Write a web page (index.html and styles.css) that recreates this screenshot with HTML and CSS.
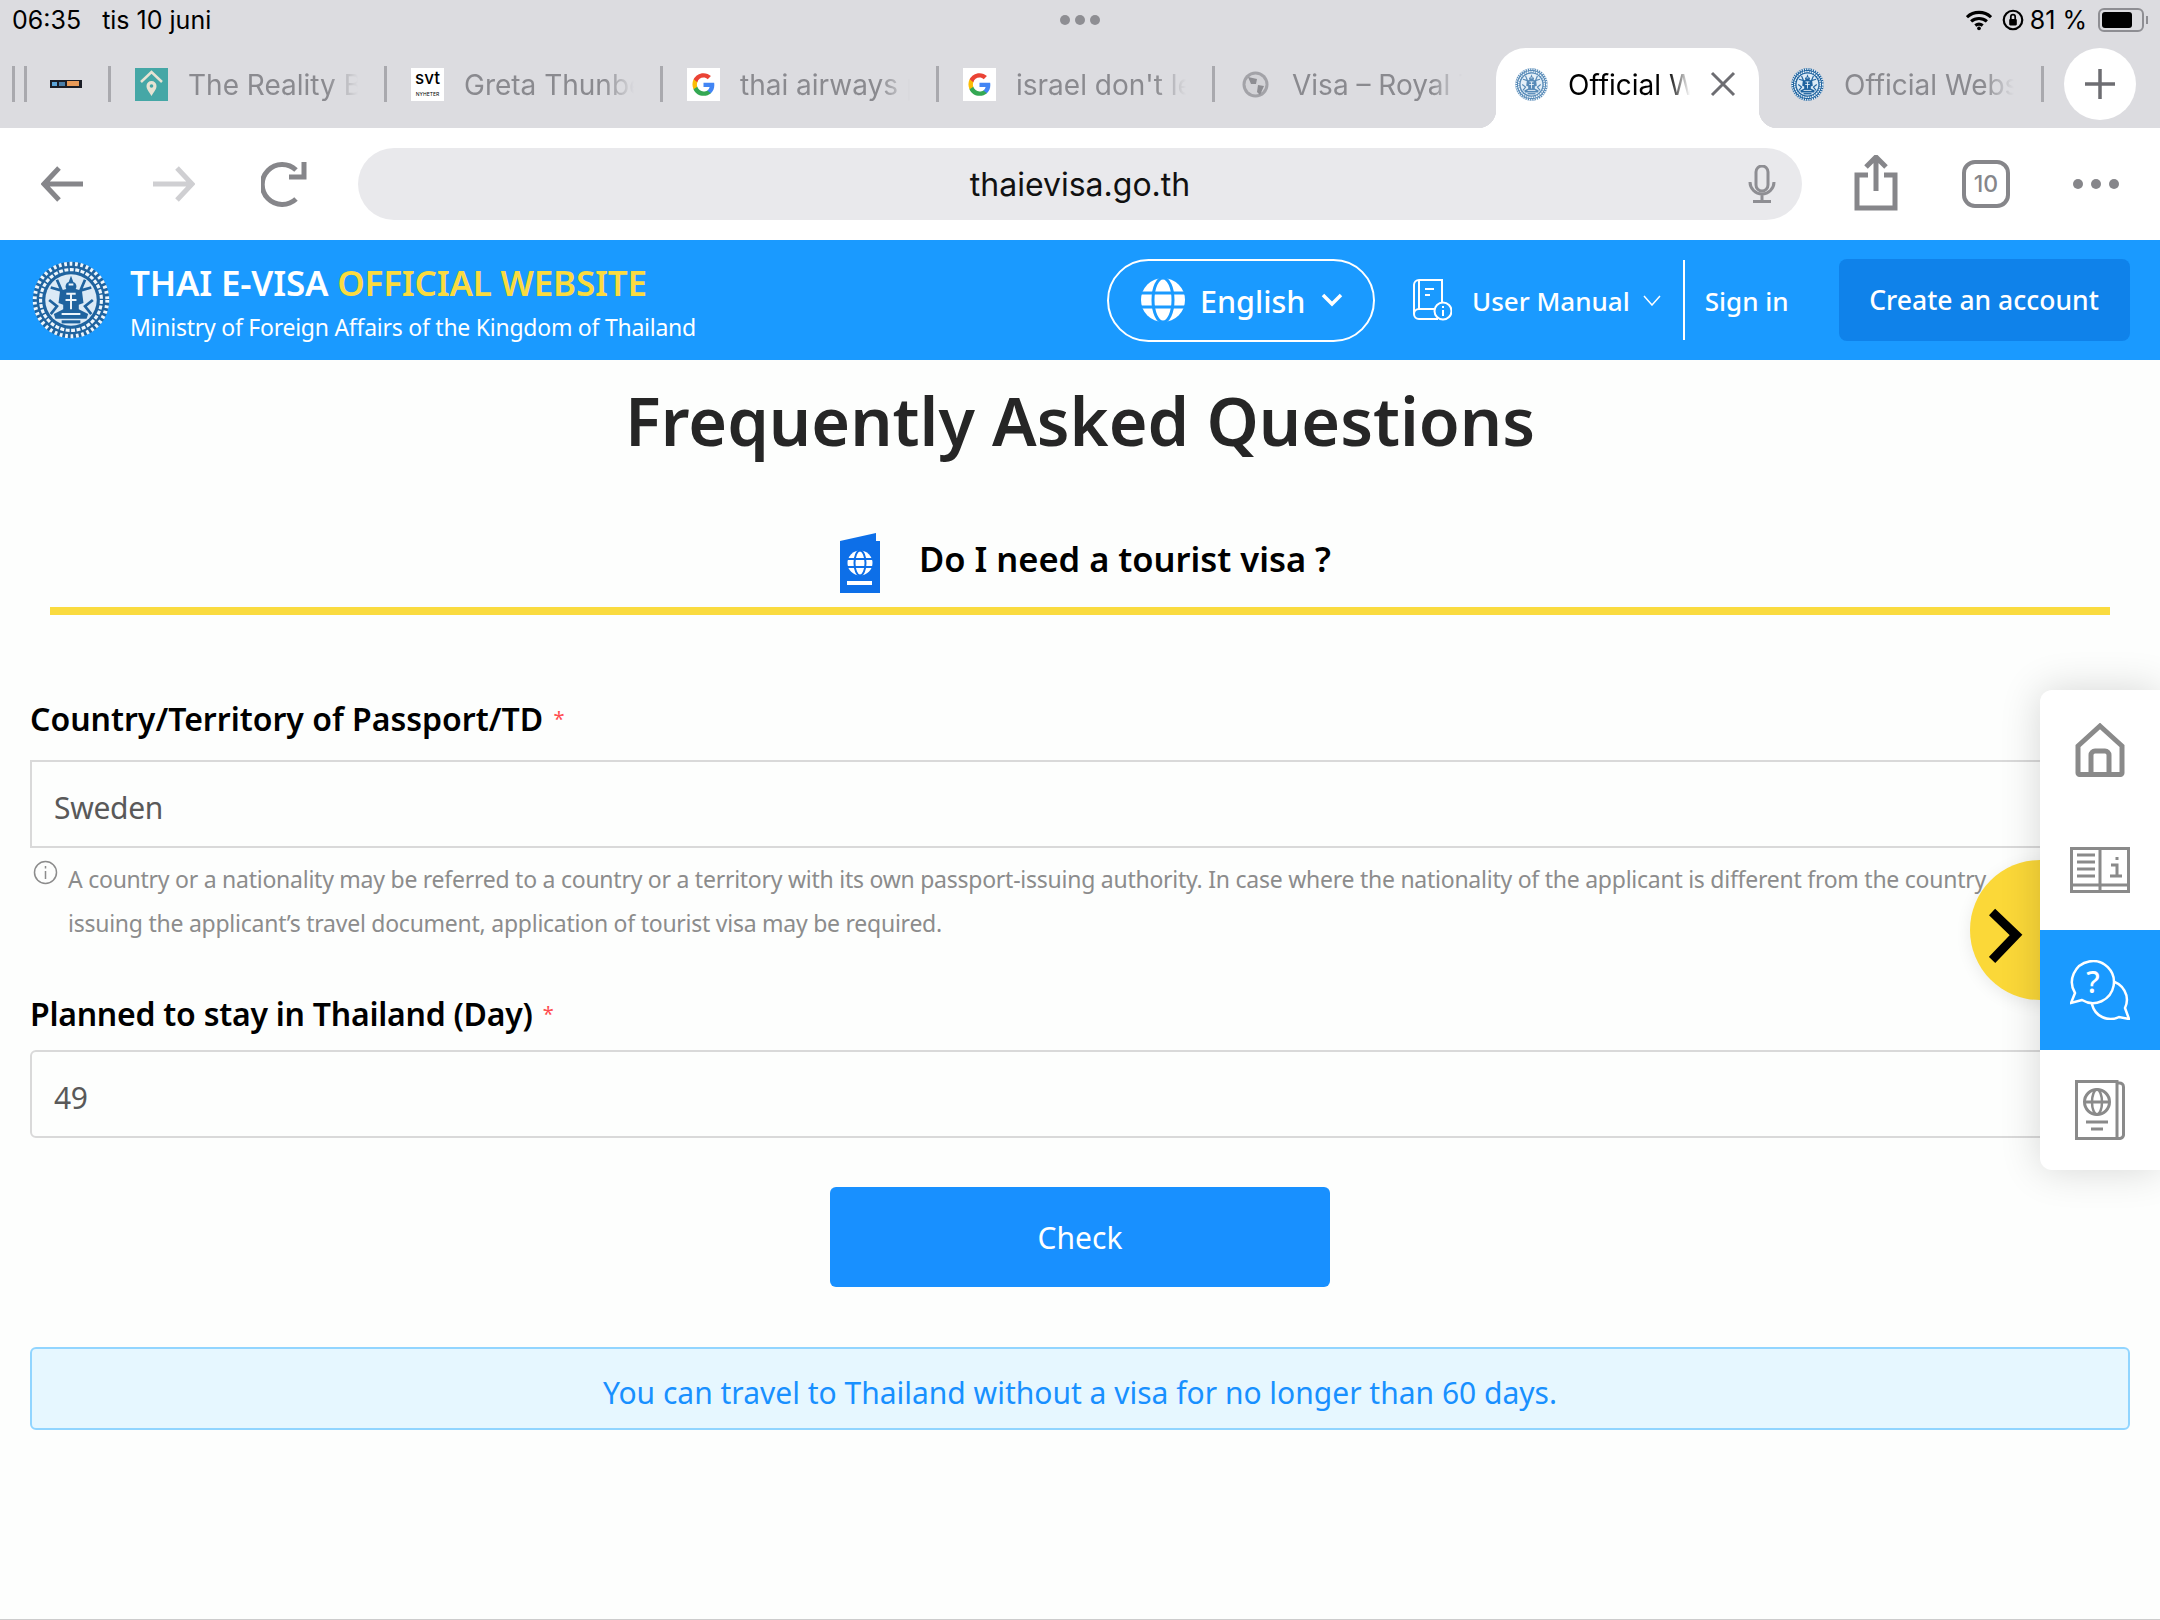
FILE: index.html
```html
<!doctype html>
<html>
<head>
<meta charset="UTF-8">
<title>Thai e-Visa - FAQ</title>
<link rel="stylesheet" href="styles.css">
</head>
<body>

<svg class="defs" width="0" height="0">
  <symbol id="seal" viewBox="0 0 100 100">
    <circle cx="50" cy="50" r="49" fill="#1f639f"/>
    <circle cx="50" cy="50" r="46.500" fill="none" stroke="#eef6fc" stroke-width="5" stroke-dasharray="3.500 3.500"/>
    <circle cx="50" cy="50" r="39" fill="none" stroke="#eef6fc" stroke-width="4" stroke-dasharray="5 2"/>
    <circle cx="50" cy="50" r="33" fill="#dbeaf6"/>
    <path d="M50 19 L53 27 A6 6 0 0 1 56 36 L64 38 L66 54 L60 56 L60 62 L72 68 L70 74 H30 L28 68 L40 62 L40 56 L34 54 L36 38 L44 36 A6 6 0 0 1 47 27 Z" fill="#1f639f"/>
    <path d="M47 30H53M44 42H56M43 50H57M38 68H62M50 42V62" stroke="#eef6fc" stroke-width="2.500"/>
    <path d="M32 24 L38 38 L24 34 M68 24 L62 38 L76 34 M22 50 L32 58 L24 68 M78 50 L68 58 L76 68" fill="none" stroke="#1f639f" stroke-width="3.500"/>
    <path d="M38 78H62" stroke="#1f639f" stroke-width="4"/>
  </symbol>
  <symbol id="gletter" viewBox="0 0 32 32">
    <path d="M26.500 16.400c0-.8-.1-1.500-.2-2.200H16v4.200h5.900c-.3 1.400-1 2.500-2.200 3.300v2.700h3.500c2.100-1.900 3.300-4.700 3.300-8z" fill="#4285f4"/>
    <path d="M16 27c2.900 0 5.400-1 7.200-2.600l-3.500-2.700c-1 .7-2.200 1-3.700 1-2.800 0-5.200-1.900-6-4.500H6.400v2.800C8.200 24.600 11.800 27 16 27z" fill="#34a853"/>
    <path d="M10 18.200c-.5-1.400-.5-3 0-4.400V11H6.400c-1.500 3-1.500 6.500 0 9.500z" fill="#fbbc05"/>
    <path d="M16 9.300c1.600 0 3 .5 4.100 1.600l3.100-3.100C21.300 6 18.900 5 16 5c-4.200 0-7.800 2.400-9.600 6l3.600 2.800c.8-2.600 3.200-4.500 6-4.500z" fill="#ea4335"/>
  </symbol>
</svg>

<div class="browser_top">
  <div class="status_bar">
    <div class="status_left"><span>06:35</span><span>tis 10 juni</span></div>
    <div class="status_dots"><i></i><i></i><i></i></div>
    <div class="status_right">
      <svg width="26" height="22" viewBox="0 0 28 22"><path d="M1 8a19 19 0 0 1 26 0M5.500 12.500a13 13 0 0 1 17 0M10 17a6.500 6.500 0 0 1 8 0" fill="none" stroke="#000" stroke-width="3.400"/><circle cx="14" cy="20" r="2" fill="#000"/></svg>
      <svg class="lock_icon" width="22" height="24" viewBox="0 0 20 22"><circle cx="10" cy="11" r="8.500" fill="none" stroke="#000" stroke-width="2"/><rect x="6.500" y="10" width="7" height="6" rx="1" fill="#000"/><path d="M8 10V8a2 2 0 0 1 4 0v2" fill="none" stroke="#000" stroke-width="1.600"/></svg>
      <span>81 %</span>
      <div class="battery"><div class="battery_fill"></div></div>
      <div class="battery_cap"></div>
    </div>
  </div>

  <div class="tabs">
    <span class="sep sep_stub"></span>
    <div class="tab tab_stub">
      <span class="sep"></span>
      <svg class="stub_logo" width="32" height="8" viewBox="0 0 32 8"><rect width="32" height="8" fill="#1a1d26"/><rect x="2" y="2" width="5" height="4" fill="#5ca4d8"/><rect x="9" y="2" width="6" height="4" fill="#4a7ea8"/><rect x="17" y="1" width="12" height="5" fill="#e89a58"/></svg>
    </div>
    <div class="tab">
      <span class="sep"></span>
      <svg class="fav" viewBox="0 0 33 33"><rect width="33" height="33" fill="#45a7a6"/><path d="M6 14 L16.500 4 L27 14" fill="none" stroke="#e7e3d3" stroke-width="2.500"/><path d="M16.500 28c-3-5-5-7-5-10a5 5 0 0 1 10 0c0 3-2 5-5 10z" fill="#e7e3d3"/><circle cx="16.500" cy="18" r="1.800" fill="#45a7a6"/></svg>
      <span class="tab_text">The Reality B</span>
    </div>
    <div class="tab">
      <span class="sep"></span>
      <div class="fav fav_svt"><b>svt</b><small>NYHETER</small></div>
      <span class="tab_text">Greta Thunbe</span>
    </div>
    <div class="tab">
      <span class="sep"></span>
      <svg class="fav fav_white"><use href="#gletter"/></svg>
      <span class="tab_text">thai airways p</span>
    </div>
    <div class="tab">
      <span class="sep"></span>
      <svg class="fav fav_white"><use href="#gletter"/></svg>
      <span class="tab_text">israel don't le</span>
    </div>
    <div class="tab tab_visa">
      <span class="sep"></span>
      <svg class="fav" viewBox="0 0 33 33"><circle cx="16.500" cy="16.500" r="13" fill="#a3a3a8"/><circle cx="16.500" cy="16.500" r="10" fill="#d3d3d7"/><path d="M9 9 L18 11 L17 16 L12 16 Z M19 17 L25 18 L21 27 L18 24 Z" fill="#8e8e93"/></svg>
      <span class="tab_text">Visa – Royal T</span>
    </div>
    <div class="tab_active">
      <svg class="fav fav_soft"><use href="#seal"/></svg>
      <span class="tab_text tab_text_on">Official W</span>
      <svg class="tab_x" width="26" height="26" viewBox="0 0 26 26"><path d="M2 2 L24 24 M24 2 L2 24" stroke="#6d6d72" stroke-width="3"/></svg>
    </div>
    <div class="tab tab_last">
      <svg class="fav"><use href="#seal"/></svg>
      <span class="tab_text">Official Webs</span>
      <span class="sep sep_end"></span>
    </div>
    <div class="new_tab">
      <svg width="32" height="32" viewBox="0 0 32 32"><path d="M16 1V31M1 16H31" stroke="#6d6d72" stroke-width="3.500"/></svg>
    </div>
  </div>
</div>

<div class="toolbar">
  <svg class="tool_icon" width="44" height="36" viewBox="0 0 44 36"><path d="M42 18H4M18 2 L3 18 L18 34" fill="none" stroke="#86868a" stroke-width="5"/></svg>
  <svg class="tool_icon tool_forward" width="44" height="36" viewBox="0 0 44 36"><path d="M2 18H40M26 2 L41 18 L26 34" fill="none" stroke="#cfcfd2" stroke-width="5"/></svg>
  <svg class="tool_icon tool_reload" width="46" height="46" viewBox="0 0 46 46"><path d="M35 9A20 20 0 1 0 35 38" fill="none" stroke="#86868a" stroke-width="5"/><path d="M43 1V16H28" fill="none" stroke="#86868a" stroke-width="5"/></svg>
  <div class="address">
    <span></span>
    <span class="address_url">thaievisa.go.th</span>
    <svg class="mic" width="28" height="38" viewBox="0 0 28 38"><rect x="8" y="1" width="12" height="25" rx="6" fill="none" stroke="#8e8e93" stroke-width="3"/><path d="M2 17a12 12 0 0 0 24 0M14 30V36M5 36.500H23" fill="none" stroke="#8e8e93" stroke-width="3"/></svg>
  </div>
  <svg class="tool_icon tool_share" width="44" height="56" viewBox="0 0 44 56"><path d="M14 20H3V53H41V20H30M22 36V3M12 12 L22 2 L32 12" fill="none" stroke="#86868a" stroke-width="5"/></svg>
  <div class="tab_count">10</div>
  <div class="more_dots"><i></i><i></i><i></i></div>
</div>

<div class="site_header">
  <svg class="site_logo"><use href="#seal"/></svg>
  <div class="site_title">
    <div class="site_title_1">THAI E-VISA <span class="yellow">OFFICIAL WEBSITE</span></div>
    <div class="site_title_2">Ministry of Foreign Affairs of the Kingdom of Thailand</div>
  </div>
  <div class="lang_pill">
    <svg width="44" height="44" viewBox="0 0 44 44"><circle cx="22" cy="22" r="22" fill="#fff"/><path d="M0 15H44M0 29H44" stroke="#1a9aff" stroke-width="3"/><ellipse cx="22" cy="22" rx="10" ry="22" fill="none" stroke="#1a9aff" stroke-width="3"/></svg>
    <span>English</span>
    <svg width="22" height="14" viewBox="0 0 22 14"><path d="M2 2 L11 11 L20 2" fill="none" stroke="#fff" stroke-width="3.500"/></svg>
  </div>
  <svg class="manual_icon" width="40" height="42" viewBox="0 0 40 42"><path d="M30 24V1H7A5 5 0 0 0 2 6V35A5 5 0 0 0 7 40H26M2 35A5 5 0 0 1 7 30H24M7 1V30M13 10H22M13 16H18" fill="none" stroke="#fff" stroke-width="2"/><circle cx="31" cy="32" r="8.500" fill="#1a9aff" stroke="#fff" stroke-width="2"/><path d="M31 31V37M31 27V29" stroke="#fff" stroke-width="2"/></svg>
  <span class="nav_text">User Manual</span>
  <svg class="manual_arrow" width="18" height="11" viewBox="0 0 18 11"><path d="M1 1 L9 10 L17 1" fill="none" stroke="#fff" stroke-width="1.500"/></svg>
  <div class="nav_divider"></div>
  <span class="nav_text">Sign in</span>
  <div class="create_btn">Create an account</div>
</div>

<div class="content">
  <h1 class="page_title">Frequently Asked Questions</h1>
  <div class="sub_title">
    <svg width="42" height="60" viewBox="0 0 42 60"><path d="M1 8 L37 0 V8 H41 V60 H1 Z" fill="#0d6fe8"/><circle cx="21" cy="30" r="12.500" fill="#fff"/><path d="M8 26H34M8 34H34" stroke="#0d6fe8" stroke-width="2"/><ellipse cx="21" cy="30" rx="5.500" ry="12.500" fill="none" stroke="#0d6fe8" stroke-width="2"/><rect x="8" y="48" width="25" height="4" fill="#fff"/></svg>
    <span class="sub_title_text">Do I need a tourist visa ?</span>
  </div>
  <div class="yellow_line"></div>

  <div class="form_label label_first">Country/Territory of Passport/TD <span class="req">*</span></div>
  <div class="input_box input_square">Sweden</div>
  <div class="note">
    <svg class="note_icon" width="25" height="25" viewBox="0 0 25 25"><circle cx="12.500" cy="12.500" r="11" fill="none" stroke="#8c8c8c" stroke-width="1.500"/><path d="M12.500 11V19M12.500 6V8.500" stroke="#8c8c8c" stroke-width="1.500"/></svg>
    <p>A country or a nationality may be referred to a country or a territory with its own passport-issuing authority. In case where the nationality of the applicant is different from the country<br>issuing the applicant’s travel document, application of tourist visa may be required.</p>
  </div>

  <div class="form_label label_second">Planned to stay in Thailand (Day) <span class="req">*</span></div>
  <div class="input_box">49</div>

  <div class="check_row"><div class="check_btn">Check</div></div>

  <div class="result_box">You can travel to Thailand without a visa for no longer than 60 days.</div>
</div>

<div class="side_toggle">
  <svg width="34" height="56" viewBox="0 0 34 56"><path d="M3 4 L27 27 L3 52" fill="none" stroke="#000" stroke-width="9"/></svg>
</div>
<div class="side_menu">
  <div class="side_item">
    <svg width="50" height="54" viewBox="0 0 50 54"><path d="M25 3 L47 23 V50 a1.500 1.500 0 0 1-1.500 1.500 H4.500 A1.500 1.500 0 0 1 3 50 V23 Z" fill="none" stroke="#8a8a8a" stroke-width="5"/><path d="M16 51 V32 a4 4 0 0 1 4-4 h10 a4 4 0 0 1 4 4 V51" fill="none" stroke="#8a8a8a" stroke-width="5"/></svg>
  </div>
  <div class="side_item">
    <svg width="60" height="46" viewBox="0 0 60 46"><path d="M1.500 1.500H30V44.500H1.500ZM30 1.500H58.500V44.500H30ZM1.500 38H58.500" fill="none" stroke="#8a8a8a" stroke-width="3"/><path d="M7 8H25M7 15H25M7 22H25M7 29H25" stroke="#8a8a8a" stroke-width="3"/><path d="M41 18H47V28M40 29H52M47 10V13" fill="none" stroke="#8a8a8a" stroke-width="3"/></svg>
  </div>
  <div class="side_item side_item_on">
    <svg width="60" height="60" viewBox="0 0 60 60"><path d="M40 21a19 19 0 1 0 9 36l10 2-4-11a19 19 0 0 0-15-27z" fill="none" stroke="#fff" stroke-width="2.500"/><path d="M12 40 L1 43 L5 33 A21 21 0 1 1 12 40z" fill="#1a9aff" stroke="#fff" stroke-width="2.500"/><text x="23" y="33" class="chat_q">?</text></svg>
  </div>
  <div class="side_item">
    <svg width="50" height="60" viewBox="0 0 50 60"><path d="M1.500 1.500H42V58.500H1.500ZM42 3H44A4 4 0 0 1 48.500 7V54A4 4 0 0 1 44 58.500H42" fill="none" stroke="#8a8a8a" stroke-width="3"/><circle cx="22" cy="22" r="12.500" fill="none" stroke="#8a8a8a" stroke-width="3"/><ellipse cx="22" cy="22" rx="5" ry="12.500" fill="none" stroke="#8a8a8a" stroke-width="2.500"/><path d="M10 22H34M11 42H33M16 49H28" stroke="#8a8a8a" stroke-width="3"/></svg>
  </div>
</div>

</body>
</html>
```

FILE: styles.css
```css
body {
    margin: 0;
    height: 1620px;
    box-sizing: border-box;
    border-bottom: 1px solid #cccccc;
    background: #fdfefd;
    font-family: "Noto Sans", sans-serif;
    color: #262626;
    overflow: hidden;
}
.defs {
    position: absolute;
}
.browser_top {
    height: 128px;
    background: #dcdce0;
    font-family: "Inter", sans-serif;
}
.status_bar {
    height: 48px;
    padding-left: 12px;
    padding-right: 12px;
    padding-bottom: 8px;
    box-sizing: border-box;
    display: grid;
    grid-template-columns: 1fr auto 1fr;
    align-items: center;
    font-size: 25px;
    color: #000;
}
.status_left {
    display: flex;
    gap: 21px;
}
.status_dots {
    display: flex;
    gap: 5px;
}
.status_dots i {
    width: 10px;
    height: 10px;
    border-radius: 50%;
    background: #8e8e93;
}
.status_right {
    display: flex;
    justify-content: flex-end;
    align-items: center;
    gap: 6px;
}
.lock_icon {
    margin-left: 4px;
}
.battery {
    width: 46px;
    height: 24px;
    margin-left: 5px;
    border: 2px solid #8e8e93;
    border-radius: 6px;
    padding: 2px;
    box-sizing: border-box;
}
.battery_fill {
    width: 80%;
    height: 100%;
    background: #000;
    border-radius: 3px;
}
.battery_cap {
    width: 2px;
    height: 8px;
    margin-left: -4px;
    background: #8e8e93;
}
.tabs {
    height: 80px;
    display: flex;
    align-items: flex-start;
    padding-left: 12px;
}
.sep {
    flex: none;
    width: 3px;
    height: 36px;
    background: #a9a9ae;
}
.sep_stub {
    margin-top: 18px;
    margin-right: 9px;
}
.tab {
    flex: none;
    width: 276px;
    height: 72px;
    display: flex;
    align-items: center;
    box-sizing: border-box;
}
.tab .sep {
    margin-right: 24px;
}
.tab_stub {
    width: 84px;
}
.stub_logo {
    margin-left: -1px;
}
.fav {
    flex: none;
    width: 33px;
    height: 33px;
}
.fav_white {
    background: #fff;
}
.fav_soft {
    opacity: 0.75;
}
.fav_svt {
    background: #fff;
    color: #000;
    text-align: center;
}
.fav_svt b {
    display: block;
    height: 20px;
    font-size: 17px;
    font-weight: 500;
    line-height: 20px;
}
.fav_svt small {
    display: block;
    height: 8px;
    margin-top: 2px;
    font-size: 5px;
    line-height: 8px;
}
.tab_text {
    flex: none;
    width: 170px;
    margin-left: 20px;
    padding-top: 1px;
    font-size: 28px;
    color: #8a8a8f;
    white-space: nowrap;
    -webkit-mask-image: linear-gradient(to right, #000 82%, transparent 100%);
}
.tab_visa {
    width: 284px;
}
.tab_active {
    flex: none;
    position: relative;
    width: 263px;
    height: 80px;
    padding-bottom: 8px;
    box-sizing: border-box;
    display: flex;
    align-items: center;
    padding-left: 19px;
    background: #fff;
    border-radius: 30px 30px 0 0;
}
.tab_active::before,
.tab_active::after {
    content: "";
    position: absolute;
    bottom: 0;
    width: 18px;
    height: 18px;
}
.tab_active::before {
    left: -18px;
    background: radial-gradient(circle at 0 0, transparent 18px, #fff 18.5px);
}
.tab_active::after {
    right: -18px;
    background: radial-gradient(circle at 100% 0, transparent 18px, #fff 18.5px);
}
.tab_text_on {
    width: 122px;
    margin-left: 20px;
    color: #000;
}
.tab_x {
    margin-left: 20px;
}
.tab_last {
    width: 285px;
    padding-left: 32px;
}
.tab_last .tab_text {
    margin-left: 20px;
}
.tab .sep_end {
    margin-left: 27px;
    margin-right: 0;
}
.new_tab {
    flex: none;
    width: 72px;
    height: 72px;
    border-radius: 50%;
    background: #fff;
    display: flex;
    align-items: center;
    justify-content: center;
    margin-left: 20px;
}
.toolbar {
    height: 112px;
    box-sizing: border-box;
    background: #fff;
    display: flex;
    align-items: center;
    padding-left: 41px;
}
.tool_icon {
    flex: none;
}
.tool_forward {
    margin-left: 66px;
}
.tool_reload {
    margin-left: 66px;
}
.address {
    width: 1444px;
    height: 72px;
    margin-left: 51px;
    padding-left: 26px;
    padding-right: 26px;
    box-sizing: border-box;
    background: #e9e9ec;
    border-radius: 36px;
    display: grid;
    grid-template-columns: 1fr auto 1fr;
    align-items: center;
    font-family: "Inter", sans-serif;
    font-size: 32px;
    color: #111;
}
.mic {
    justify-self: end;
}
.tool_share {
    margin-left: 52px;
    margin-top: -2px;
}
.tab_count {
    flex: none;
    width: 48px;
    height: 48px;
    box-sizing: border-box;
    margin-left: 64px;
    border: 4px solid #86868a;
    border-radius: 13px;
    text-align: center;
    line-height: 40px;
    font-family: "Inter", sans-serif;
    font-size: 23px;
    font-weight: 500;
    color: #86868a;
}
.more_dots {
    display: flex;
    gap: 8px;
    margin-left: 63px;
}
.more_dots i {
    width: 10px;
    height: 10px;
    border-radius: 50%;
    background: #86868a;
}
.site_header {
    height: 120px;
    background: #1a9aff;
    display: flex;
    align-items: center;
    padding-left: 32px;
    color: #fff;
}
.site_logo {
    flex: none;
    width: 78px;
    height: 78px;
}
.site_title {
    width: 977px;
    margin-left: 20px;
    padding-top: 4px;
}
.site_title_1 {
    font-size: 35px;
    font-weight: 600;
    line-height: 44px;
    letter-spacing: -0.2px;
}
.yellow {
    color: #fadb3f;
}
.site_title_2 {
    font-size: 23px;
    line-height: 34px;
    margin-top: 5px;
    letter-spacing: -0.25px;
}
.lang_pill {
    flex: none;
    width: 268px;
    height: 83px;
    box-sizing: border-box;
    border: 2px solid #fff;
    border-radius: 42px;
    display: flex;
    align-items: center;
    padding-left: 32px;
    font-size: 30.5px;
    font-weight: 500;
}
.lang_pill span {
    margin-left: 15px;
    margin-right: 16px;
    margin-top: 2px;
}
.manual_icon {
    flex: none;
    margin-left: 37px;
}
.nav_text {
    font-size: 26px;
    font-weight: 500;
    margin-top: 1px;
}
.manual_icon + .nav_text {
    margin-left: 20px;
}
.manual_arrow {
    margin-left: 13px;
}
.nav_divider {
    width: 2px;
    height: 80px;
    background: #fff;
    margin-left: 22px;
    margin-right: 20px;
}
.create_btn {
    flex: none;
    width: 291px;
    height: 82px;
    margin-left: 50px;
    background: #0f82ea;
    border-radius: 8px;
    font-size: 26.5px;
    font-weight: 500;
    line-height: 82px;
    text-align: center;
}
.content {
    padding-left: 30px;
    padding-right: 30px;
}
.page_title {
    margin: 0;
    height: 122px;
    font-size: 66.5px;
    font-weight: 600;
    line-height: 120px;
    text-align: center;
}
.sub_title {
    height: 125px;
    padding-top: 37px;
    padding-left: 10px;
    box-sizing: border-box;
    display: flex;
    justify-content: center;
    gap: 38px;
    align-items: center;
    font-size: 34.5px;
    font-weight: 600;
    color: #000;
}
.sub_title_text {
    margin-top: -9px;
}
.yellow_line {
    height: 8px;
    margin-left: 20px;
    margin-right: 20px;
    background: #fadb3f;
}
.form_label {
    font-size: 32px;
    font-weight: 600;
    line-height: 44px;
    color: #000;
}
.label_first {
    margin-top: 82px;
}
.label_second {
    margin-top: 47px;
    letter-spacing: -0.25px;
}
.req {
    color: #ff4d4f;
    font-size: 20px;
    font-weight: 400;
    vertical-align: 5px;
    margin-left: 2px;
}
.input_box {
    height: 88px;
    margin-top: 14px;
    box-sizing: border-box;
    border: 2px solid #d9d9d9;
    border-radius: 6px;
    padding-left: 22px;
    font-size: 30px;
    letter-spacing: -0.3px;
    line-height: 91px;
    color: #595959;
}
.input_square {
    margin-top: 19px;
    border-radius: 0;
}
.note {
    display: flex;
    margin-top: 12px;
    color: #8c8c8c;
}
.note_icon {
    flex: none;
    margin-left: 3px;
    margin-right: 10px;
}
.note p {
    margin: -3px 0 0 0;
    font-size: 23px;
    line-height: 44px;
    letter-spacing: -0.25px;
    white-space: nowrap;
}
.check_row {
    display: flex;
    justify-content: center;
    margin-top: 49px;
}
.check_btn {
    width: 500px;
    height: 100px;
    background: #1890ff;
    border-radius: 6px;
    color: #fff;
    font-size: 30px;
    line-height: 102px;
    text-align: center;
}
.result_box {
    height: 83px;
    margin-top: 60px;
    box-sizing: border-box;
    background: #e6f7ff;
    border: 2px solid #91d5ff;
    border-radius: 6px;
    color: #1890ff;
    font-size: 30px;
    line-height: 87px;
    text-align: center;
}
.side_toggle {
    position: absolute;
    left: 1970px;
    top: 860px;
    width: 140px;
    height: 140px;
    border-radius: 50%;
    background: #fbd838;
    box-shadow: 0 4px 16px rgba(0, 0, 0, 0.08);
}
.side_toggle svg {
    position: absolute;
    left: 19px;
    top: 48px;
}
.side_menu {
    position: absolute;
    left: 2040px;
    top: 690px;
    width: 120px;
    height: 480px;
    background: #fff;
    border-radius: 12px 0 0 12px;
    box-shadow: 0 0 40px rgba(0, 0, 0, 0.16);
    overflow: hidden;
}
.side_item {
    height: 120px;
    display: flex;
    align-items: center;
    justify-content: center;
}
.side_item_on {
    background: #1a9aff;
}
.chat_q {
    fill: #fff;
    font-size: 30px;
    font-weight: 500;
    text-anchor: middle;
}
```
